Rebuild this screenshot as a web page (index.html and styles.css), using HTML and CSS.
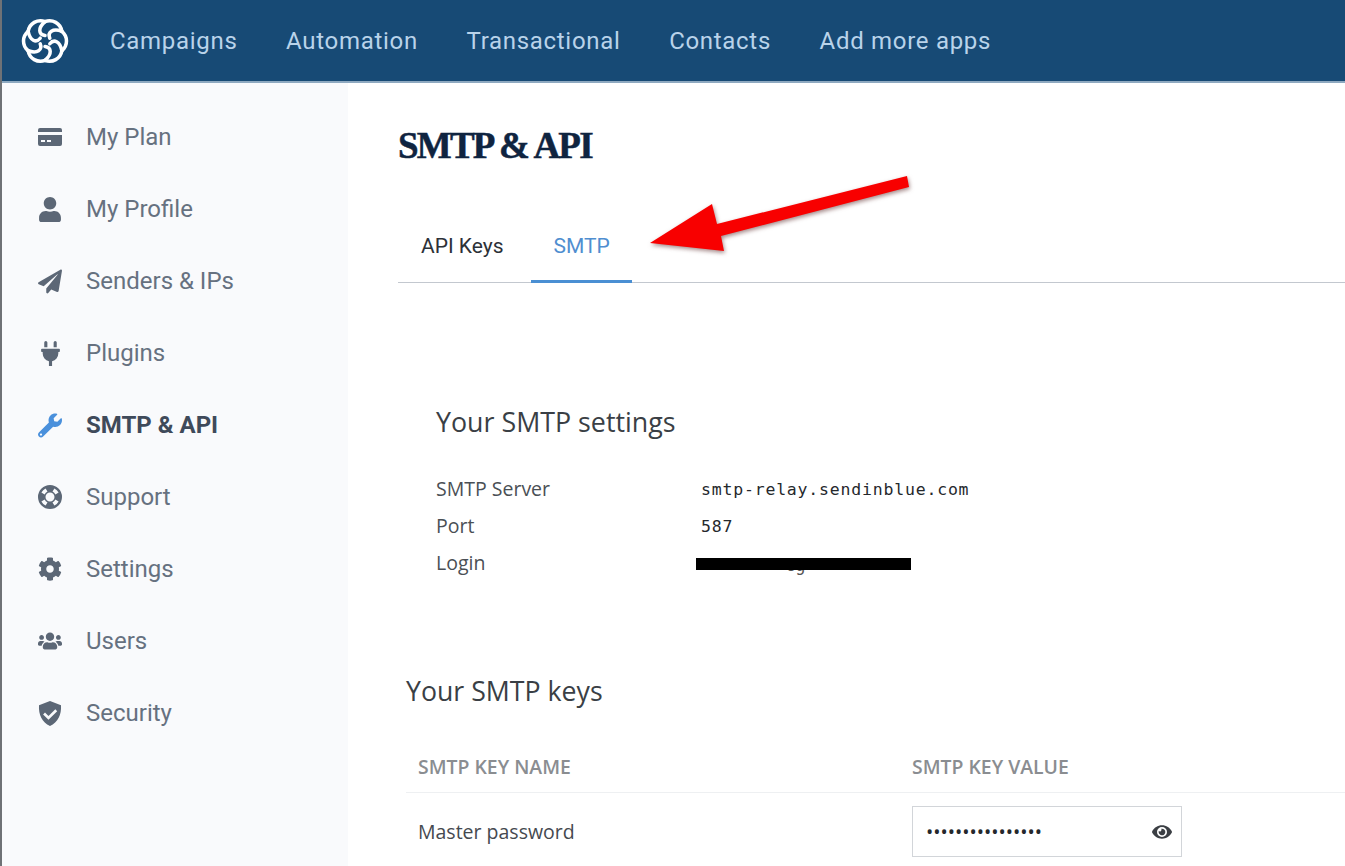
FILE: index.html
```html
<!DOCTYPE html>
<html lang="en">
<head>
<meta charset="utf-8">
<title>SMTP &amp; API</title>
<link rel="stylesheet" href="styles.css">
</head>
<body>
<div class="app">
  <header class="topbar">
    <svg class="logo" viewBox="-27 -27 54 54" aria-hidden="true">
      <defs>
        <g id="petal">
          <path d="M0 -21 A13.5 13.5 0 0 1 18.190 -10.500"/>
          <path d="M0 -21 C-8 -14 -7 -7 0 -6"/>
        </g>
      </defs>
      <use href="#petal"/>
      <use href="#petal" transform="rotate(60)"/>
      <use href="#petal" transform="rotate(120)"/>
      <use href="#petal" transform="rotate(180)"/>
      <use href="#petal" transform="rotate(240)"/>
      <use href="#petal" transform="rotate(300)"/>
    </svg>
    <nav class="topnav">
      <a>Campaigns</a><a>Automation</a><a>Transactional</a><a>Contacts</a><a>Add more apps</a>
    </nav>
  </header>
  <div class="body">
    <aside class="sidebar">
      <a class="item">
        <span class="ico"><svg width="24" height="20" viewBox="0 0 24 20"><path fill-rule="evenodd" d="M2 1h20a2 2 0 0 1 2 2v2H0V3a2 2 0 0 1 2-2zM0 8h24v9a2 2 0 0 1-2 2H2a2 2 0 0 1-2-2zm3 5v2h4v-2zm6 0v2h4v-2z"/></svg></span>
        My Plan
      </a>
      <a class="item">
        <span class="ico"><svg width="22" height="25" viewBox="0 0 448 512"><path d="M224 256c70.7 0 128-57.3 128-128S294.7 0 224 0 96 57.3 96 128s57.3 128 128 128zm89.6 32h-16.7c-22.2 10.2-46.9 16-72.9 16s-50.6-5.8-72.9-16h-16.7C60.2 288 0 348.2 0 422.4V464c0 26.5 21.5 48 48 48h352c26.5 0 48-21.5 48-48v-41.6c0-74.2-60.2-134.4-134.4-134.4z"/></svg></span>
        My Profile
      </a>
      <a class="item">
        <span class="ico"><svg width="25" height="25" viewBox="0 0 512 512"><path d="M476 3.2L12.5 270.6c-18.1 10.4-15.8 35.6 2.2 43.2L121 358.4l287.3-253.2c5.5-4.9 13.3 2.6 8.6 8.3L176 407v80.5c0 23.6 28.5 32.9 42.5 15.8L282 426l124.6 52.2c14.2 6 30.4-2.9 33-18.2l72-432C515 7.8 493.3-6.8 476 3.2z"/></svg></span>
        Senders &amp; IPs
      </a>
      <a class="item">
        <span class="ico"><svg width="19" height="25" viewBox="0 0 384 512"><path d="M320 32a32 32 0 0 0-64 0v96h64Zm48 128H16A16 16 0 0 0 0 176v32a16 16 0 0 0 16 16H32v32A160.07 160.07 0 0 0 160 412.8V512h64V412.8A160.07 160.07 0 0 0 352 256V224h16a16 16 0 0 0 16-16V176A16 16 0 0 0 368 160ZM128 32a32 32 0 0 0-64 0v96h64Z"/></svg></span>
        Plugins
      </a>
      <a class="item active">
        <span class="ico"><svg width="25" height="25" viewBox="0 0 512 512"><path d="M507.73 109.1c-2.24-9.03-13.54-12.09-20.12-5.51l-74.36 74.36-67.88-11.31-11.31-67.88 74.36-74.36c6.62-6.62 3.43-17.9-5.66-20.16-47.38-11.74-99.55.91-136.58 37.93-39.64 39.64-50.55 97.1-34.05 147.2L18.74 402.76c-24.99 24.99-24.99 65.51 0 90.5 24.99 24.99 65.51 24.99 90.5 0l213.21-213.21c50.12 16.71 107.47 5.68 147.37-34.22 37.07-37.07 49.7-89.32 37.91-136.73zM64 472c-13.25 0-24-10.75-24-24 0-13.26 10.75-24 24-24s24 10.74 24 24c0 13.25-10.75 24-24 24z"/></svg></span>
        SMTP &amp; API
      </a>
      <a class="item">
        <span class="ico"><svg width="24" height="24" viewBox="0 0 24 24"><path fill-rule="evenodd" d="M12 0a12 12 0 1 1 0 24a12 12 0 0 1 0-24zm0 7.5a4.5 4.5 0 1 0 0 9a4.5 4.500 0 0 0 0-9zM7.600 3.400a10 10 0 0 0-4.200 4.200l3.200 1.900a6.500 6.500 0 0 1 2.900-2.900zm8.800 0l-1.900 3.200a6.500 6.500 0 0 1 2.900 2.900l3.200-1.900a10 10 0 0 0-4.200-4.200zM3.400 16.400a10 10 0 0 0 4.200 4.200l1.900-3.200a6.500 6.500 0 0 1-2.900-2.900zm17.200 0l-3.200-1.900a6.500 6.500 0 0 1-2.900 2.900l1.900 3.200a10 10 0 0 0 4.200-4.200z"/></svg></span>
        Support
      </a>
      <a class="item">
        <span class="ico"><svg width="24" height="24" viewBox="0 0 512 512"><path d="M487.4 315.7l-42.6-24.6c4.3-23.2 4.3-47 0-70.2l42.6-24.6c4.9-2.8 7.1-8.6 5.5-14-11.1-35.6-30-67.8-54.7-94.6-3.8-4.1-10-5.1-14.8-2.3L380.8 110c-17.9-15.4-38.5-27.3-60.8-35.1V25.8c0-5.6-3.9-10.5-9.4-11.7-36.7-8.2-74.3-7.8-109.2 0-5.5 1.2-9.4 6.1-9.4 11.7V75c-22.2 7.9-42.8 19.8-60.8 35.1L88.7 85.5c-4.9-2.8-11-1.9-14.8 2.3-24.7 26.7-43.6 58.9-54.7 94.6-1.7 5.4.6 11.2 5.5 14L67.3 221c-4.3 23.2-4.3 47 0 70.2l-42.6 24.6c-4.9 2.8-7.1 8.6-5.5 14 11.1 35.6 30 67.8 54.7 94.6 3.8 4.1 10 5.1 14.8 2.3l42.6-24.6c17.9 15.4 38.5 27.3 60.8 35.1v49.2c0 5.6 3.9 10.5 9.4 11.7 36.7 8.2 74.3 7.8 109.2 0 5.5-1.2 9.4-6.1 9.4-11.7v-49.2c22.2-7.9 42.8-19.8 60.8-35.1l42.6 24.6c4.9 2.8 11 1.9 14.8-2.3 24.7-26.7 43.6-58.9 54.7-94.6 1.5-5.5-.7-11.3-5.6-14.1zM256 336c-44.1 0-80-35.9-80-80s35.9-80 80-80 80 35.9 80 80-35.9 80-80 80z"/></svg></span>
        Settings
      </a>
      <a class="item">
        <span class="ico"><svg width="25" height="20" viewBox="0 0 640 512"><path d="M96 224c35.3 0 64-28.7 64-64s-28.7-64-64-64-64 28.7-64 64 28.7 64 64 64zm448 0c35.3 0 64-28.7 64-64s-28.7-64-64-64-64 28.7-64 64 28.7 64 64 64zm32 32h-64c-17.6 0-33.5 7.1-45.1 18.6 40.3 22.1 68.9 62 75.1 109.4h66c17.7 0 32-14.3 32-32v-32c0-35.3-28.7-64-64-64zm-256 0c61.9 0 112-50.1 112-112S381.9 32 320 32 208 82.1 208 144s50.1 112 112 112zm76.8 32h-8.3c-20.8 10-43.9 16-68.5 16s-47.6-6-68.5-16h-8.3C179.6 288 128 339.6 128 403.2V432c0 26.5 21.5 48 48 48h288c26.5 0 48-21.5 48-48v-28.8c0-63.6-51.6-115.2-115.2-115.2zm-223.7-13.4C161.5 263.1 145.6 256 128 256H64c-35.3 0-64 28.7-64 64v32c0 17.7 14.3 32 32 32h65.9c6.3-47.4 34.9-87.3 75.2-109.4z"/></svg></span>
        Users
      </a>
      <a class="item">
        <span class="ico"><svg width="24" height="25" viewBox="0 0 24 25"><path fill-rule="evenodd" d="M12 0L23 4.200c.6 9.800-3 16.800-11 20.800C4 21 .4 14 1 4.200zM17.300 8.300L10.500 15l-3.500-3.400-1.900 1.900 5.400 5.300 8.700-8.600z"/></svg></span>
        Security
      </a>
    </aside>
    <main class="content">
      <h1 class="title">SMTP &amp; API</h1>
      <div class="tabs">
        <a class="tab">API Keys</a>
        <a class="tab current">SMTP</a>
      </div>
      <section class="settings">
        <h2 class="settings-title">Your SMTP settings</h2>
        <dl class="settings-list">
          <dt>SMTP Server</dt><dd>smtp-relay.sendinblue.com</dd>
          <dt>Port</dt><dd>587</dd>
          <dt>Login</dt><dd class="redacted"><span class="peek">cg</span><span class="bar"></span></dd>
        </dl>
      </section>
      <section class="keys">
        <h2 class="keys-title">Your SMTP keys</h2>
        <div class="key-head">
          <span>SMTP KEY NAME</span>
          <span>SMTP KEY VALUE</span>
        </div>
        <div class="key-row">
          <span>Master password</span>
          <div class="key-input">
            <span class="dots">••••••••••••••••</span>
            <svg class="eye" width="20" height="18" viewBox="0 0 576 512"><path d="M572.52 241.4C518.29 135.59 410.93 64 288 64S57.68 135.64 3.48 241.41a32.35 32.35 0 0 0 0 29.19C57.71 376.41 165.07 448 288 448s230.32-71.64 284.52-177.41a32.35 32.35 0 0 0 0-29.19zM288 400a144 144 0 1 1 144-144 143.93 143.93 0 0 1-144 144zm0-240a95.31 95.31 0 0 0-25.31 3.79 47.85 47.85 0 0 1-66.9 66.9A95.78 95.78 0 1 0 288 160z"/></svg>
          </div>
        </div>
      </section>
    </main>
  </div>
  <svg class="arrow" width="300" height="110" viewBox="640 165 300 110" aria-hidden="true">
    <polygon points="907,176 909,187 721,236 724,251 650,243 712,204 717,224"/>
  </svg>
</div>
</body>
</html>
```
FILE: styles.css
```css
* { box-sizing: border-box; }
html, body { margin: 0; height: 100%; }
body { background: #fff; overflow: hidden; font-family: "Open Sans", sans-serif; }
.app { position: relative; height: 866px; border-left: 2px solid #6f7276; overflow: hidden; }

.topbar { height: 83px; background: #174a75; display: flex; align-items: center; padding-left: 18px; border-bottom: 2px solid #8ea9c0; }
.logo { width: 50px; height: 50px; fill: none; stroke: #fff; stroke-width: 3.8; stroke-linecap: round; flex: none; }
.topnav { display: flex; gap: 48.6px; margin-left: 40px; font-family: Roboto, sans-serif; font-size: 24px; letter-spacing: 0.7px; color: #b9d3ea; }

.body { display: flex; height: 783px; }
.sidebar { width: 346px; flex: none; background: #f9fafc; padding-top: 18px; }
.item { height: 72px; display: flex; align-items: center; font-family: Roboto, sans-serif; font-size: 24px; color: #667180; }
.ico { width: 84px; padding: 0 24px 0 36px; display: flex; flex: none; }
.ico svg { fill: #5c6776; display: block; margin: 0 auto; }
.item.active { font-weight: 700; color: #3f4a5a; }
.item.active svg { fill: #4a90dc; }

.content { flex: 1; padding: 40px 0 0 50px; min-width: 0; }
.title { margin: 0; font-family: "Liberation Serif", serif; font-weight: 700; font-size: 37px; line-height: 46px; letter-spacing: -1.8px; color: #0f2440; -webkit-text-stroke: 0.5px #0f2440; }
.tabs { margin-top: 31px; display: flex; height: 83px; padding-left: 1px; border-bottom: 1px solid #c3c8cf; font-family: Roboto, sans-serif; font-size: 21px; color: #2c3138; }
.tab { padding: 34px 22px 0; }
.tab.current { margin-left: 5px; padding-left: 23px; color: #4f8ed0; border-bottom: 3px solid #4a8fd3; margin-bottom: -1px; }

.settings { padding: 122px 0 0 38px; }
.settings-title { margin: 0; font-weight: 400; font-size: 26.8px; line-height: 34px; color: #3a3f45; }
.settings-list { margin: 31px 0 0; display: grid; grid-template-columns: 265px 1fr; grid-auto-rows: 37px; align-items: center; font-size: 19.5px; color: #4a4f55; }
.settings-list dt { font-weight: 400; }
.settings-list dd { margin: 0; font-family: "DejaVu Sans Mono", monospace; font-size: 16.5px; letter-spacing: 0.8px; color: #25282c; padding-top: 2px; }
.settings-list .redacted { position: relative; height: 30px; padding-top: 0; }
.peek { position: absolute; left: 84px; top: 7px; font-size: 17px; letter-spacing: 0; color: #555; }
.bar { position: absolute; left: -5px; top: 10px; width: 215px; height: 12px; background: #000; }

.keys { padding: 93px 0 0 8px; }
.keys-title { margin: 0; font-weight: 400; font-size: 26.7px; line-height: 34px; color: #3a3f45; }
.key-head { margin-top: 46px; height: 39px; display: grid; grid-template-columns: 494px 1fr; padding-left: 12px; border-bottom: 1px solid #eef0f2; font-weight: 600; font-size: 19.4px; color: #8a8d91; line-height: 26px; }
.key-row { display: grid; grid-template-columns: 494px 270px; padding: 13px 0 0 12px; align-items: center; font-size: 19.5px; color: #45494f; }
.key-input { height: 51px; border: 1px solid #d2d5d9; display: flex; align-items: center; justify-content: space-between; padding: 0 9px 0 13px; }
.dots { font-size: 19.3px; letter-spacing: 0; color: #25282c; }
.eye { fill: #3b3f44; }

.arrow { position: absolute; left: 638px; top: 165px; overflow: visible; }
.arrow polygon { fill: #f80000; filter: drop-shadow(1px 2px 2px rgba(90,40,40,.55)); }
```
